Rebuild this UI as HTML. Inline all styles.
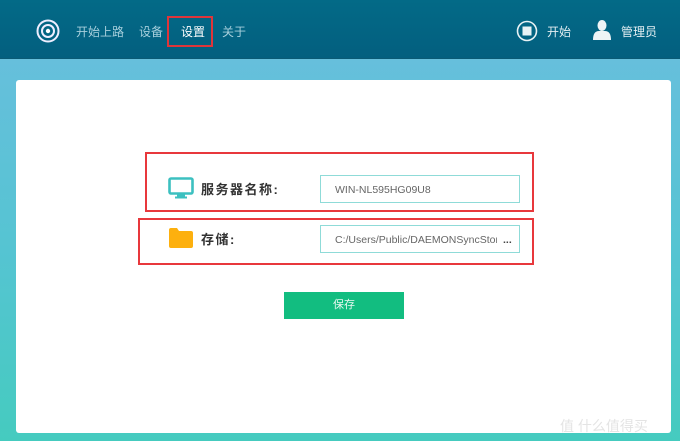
<!DOCTYPE html>
<html><head><meta charset="utf-8"><style>
*{margin:0;padding:0;box-sizing:border-box}
body{width:680px;height:441px;overflow:hidden;position:relative;font-family:"Liberation Sans","Noto Sans CJK SC",sans-serif;background:linear-gradient(180deg,#66bfdc 58px,#55c4d2 250px,#45cbbf 441px)}
.hdr{position:absolute;left:0;top:0;width:680px;height:59px;background:linear-gradient(180deg,#036a87,#035f7f);border-bottom:1px solid #0a5a75}
.nav{position:absolute;top:23px;font-size:12px;color:#a7cfdc}
.card{position:absolute;left:16px;top:80px;width:655px;height:353px;background:#fff;border-radius:3px}
.rb{position:absolute;border:2px solid #e8383c}
.inp{position:absolute;left:320px;width:200px;height:28px;border:1.5px solid #8fdbd8;font-size:10.5px;color:#666;padding:8px 0 0 14px;white-space:nowrap;overflow:hidden}
.lbl{position:absolute;font-size:13px;font-weight:bold;color:#333;font-family:"Liberation Sans","Noto Sans CJK SC",sans-serif;letter-spacing:1.5px}
.btn{position:absolute;left:284px;top:292px;width:120px;height:27px;background:#12bd80;color:#e8f8f0;font-size:11px;text-align:center;line-height:27px}
</style></head><body>
<div class="hdr">
<svg style="position:absolute;left:36px;top:19px" width="24" height="24"><circle cx="12" cy="12" r="10.5" fill="none" stroke="#eef" stroke-width="2"/><circle cx="12" cy="12" r="6" fill="none" stroke="#eef" stroke-width="2"/><circle cx="12" cy="12" r="2.2" fill="#fff"/></svg>
<div class="nav" style="left:76px">开始上路</div>
<div class="nav" style="left:139px">设备</div>
<div class="nav" style="left:181px;color:#fff">设置</div>
<div style="position:absolute;left:167px;top:16px;width:46px;height:31px;border:2px solid #e0353a"></div>
<div class="nav" style="left:222px">关于</div>
<svg style="position:absolute;left:516px;top:20px" width="22" height="22"><circle cx="11" cy="11" r="9.5" fill="none" stroke="#e8f2f5" stroke-width="1.6"/><rect x="6.5" y="6.5" width="9" height="9" fill="#e8f2f5"/></svg>
<div class="nav" style="left:547px;color:#e3eef2">开始</div>
<svg style="position:absolute;left:592px;top:19px" width="20" height="22"><ellipse cx="10" cy="6.5" rx="4.5" ry="5.5" fill="#eef4f6"/><path d="M1 21 Q1 12 7 12 L13 12 Q19 12 19 21 Z" fill="#eef4f6"/></svg>
<div class="nav" style="left:621px;color:#e3eef2">管理员</div>
</div>
<div class="card"></div>
<div class="rb" style="left:145px;top:152px;width:389px;height:60px"></div>
<div class="rb" style="left:138px;top:218px;width:396px;height:47px"></div>
<svg style="position:absolute;left:168px;top:177px" width="26" height="22"><rect x="1.5" y="1.5" width="23" height="15" rx="1.5" fill="none" stroke="#3cc0c0" stroke-width="2.6"/><rect x="9" y="17" width="8" height="3" fill="#3cc0c0"/><rect x="7" y="19.5" width="12" height="2" fill="#3cc0c0"/></svg>
<div class="lbl" style="left:201px;top:179px">服务器名称:</div>
<div class="inp" style="top:175px">WIN-NL595HG09U8</div>
<svg style="position:absolute;left:169px;top:228px" width="24" height="20"><path d="M0 2 Q0 0 2 0 L8 0 L10 3 L22 3 Q24 3 24 5 L24 18 Q24 20 22 20 L2 20 Q0 20 0 18 Z" fill="#fdb00e"/></svg>
<div class="lbl" style="left:201px;top:229px">存储:</div>
<div class="inp" style="top:225px"><span style="display:inline-block;width:162px;overflow:hidden;vertical-align:top">C:/Users/Public/DAEMONSyncStorage</span><span style="color:#444;font-weight:bold;margin-left:6px">...</span></div>
<div class="btn">保存</div>
<div style="position:absolute;left:560px;top:416px;font-size:14px;color:#e4e4e4">值 什么值得买</div>
</body></html>
